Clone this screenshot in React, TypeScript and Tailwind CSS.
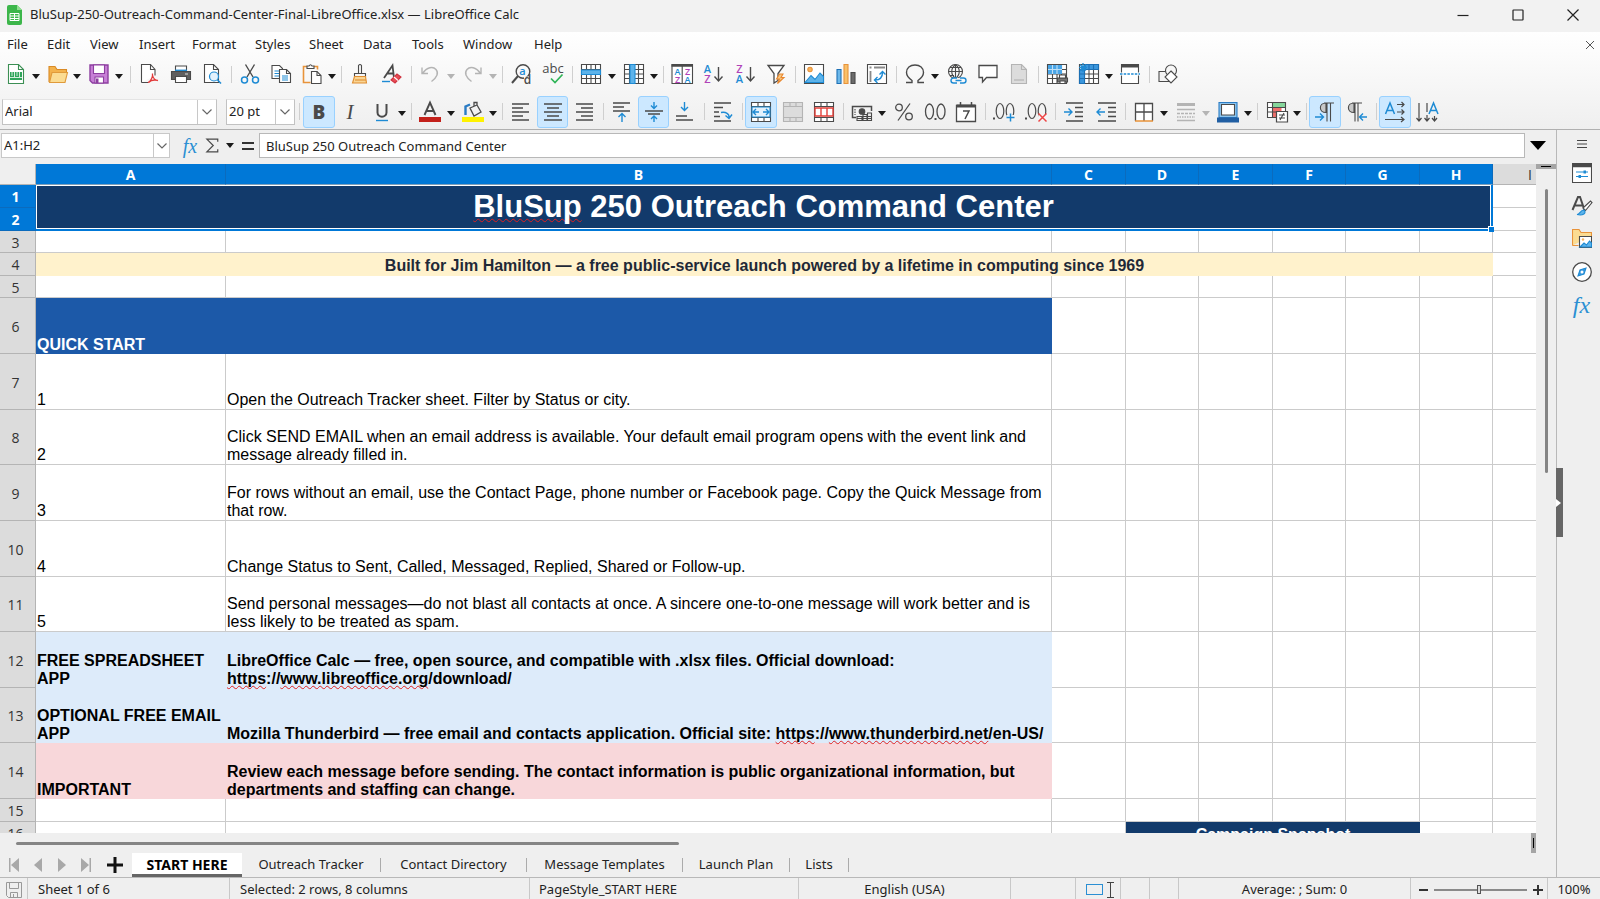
import React from 'react';

const ink = '#4a4a4a';
const blue = '#1e8bd4';
const grey = '#b4b4b4';

const Svg = ({ children, className = 'size-5' }: { children: React.ReactNode; className?: string }) => (
  <svg viewBox="0 0 20 20" className={`shrink-0 ${className}`} fill="none" stroke={ink} strokeWidth="1.1" aria-hidden="true">
    {children}
  </svg>
);

const glyph = { stroke: 'none', fontFamily: 'Open Sans, sans-serif', textAnchor: 'middle' as const };

const Lines = ({ rows, y0 = 2, step = 4, color = ink }: { rows: [number, number][]; y0?: number; step?: number; color?: string }) => (
  <path stroke={color} strokeWidth="1.4" d={rows.map(([a, b], i) => `M${a} ${y0 + i * step}H${b}`).join('')} />
);

const TableGrid = ({ stroke = ink }: { stroke?: string }) => (
  <path stroke={stroke} d="M.5.5h19v19H.5zM.5 5.500h19M.5 10h19M.5 14.500h19M5.500.5v19M10 .5v19M14.500.5v19" />
);

const icons: Record<string, React.ReactNode> = {
  newDoc: <><path fill="#fff" stroke="#3c8f54" d="M2.5.5h10l5 5v14h-15z" /><path stroke="#3c8f54" d="M12.5.5v5h5" /><path fill="#2fa55a" stroke="none" d="M4 8h12v8H4z" /><path stroke="#fff" strokeWidth=".8" d="M6 8v4M8.500 8v5M11 8v4M13.500 8v5M4 13.500h12" /></>,
  open: <><path fill="#f3b24b" stroke="#d98a26" d="M1 18V2.500h6l2 3h9.500V8" /><path fill="#fbdc92" stroke="#e09a3a" d="M1.500 18.500 4 8.500h15.500L17 18.500z" /></>,
  save: <><path fill="#c77fd6" stroke="#8d3fa0" strokeWidth="1.400" d="M1 1h18v18H3.500L1 16.500z" /><path fill="#fff" stroke="#8d3fa0" d="M4.500 1h11v8.500h-11zM6 13h8.500v6H6z" /><path fill="#8d3fa0" stroke="none" d="M7 14.500h2.500V19H7z" /></>,
  pdf: <><path fill="#fff" d="M2.500 18.500V.5h9l4.500 5v6M2.500 18.500h6.500" /><path d="M11.500.5v5H16" /><path stroke="#e23a3a" strokeWidth="1.300" d="M9 18.500c3-1.500 5-5.500 4.500-9M13.500 11c.5 3 2 5 5.500 5.500M9.500 18.500c2-2 6-3 9.500-2" /></>,
  print: <><path fill="#fff" d="M4.500 7V2h11v5" /><path stroke={blue} strokeWidth="1.800" d="M4 6.500h12" /><path fill="#5f5f5f" stroke={ink} d="M.5 7.500h19v8H.5z" /><path fill="#fff" d="M4.500 12.500h11v6h-11z" /><path stroke="#d0d0d0" d="M14 10h3" /></>,
  preview: <><path fill="#fff" d="M2.500.5h9l5 5v13h-14z" /><path d="M11.500.5v5h5" /><circle cx="12" cy="12.500" r="4.500" fill="#e3f1fc" stroke={blue} strokeWidth="1.200" /><path stroke={blue} strokeWidth="1.600" d="m15.500 16 3.500 3.500" /></>,
  cut: <><path strokeWidth="1.400" d="M5.500.5 13 13M14.500.5 7 13" /><circle cx="4.500" cy="16" r="3" stroke={blue} strokeWidth="1.500" /><circle cx="15.500" cy="16" r="3" stroke={blue} strokeWidth="1.500" /></>,
  copy: <><path fill="#fff" d="M1 14.500V1.500h7.500l3 3v10z" /><path stroke={blue} d="M3.500 7h5M3.500 9.500h5M3.500 12h5" /><path fill="#fff" d="M8.500 18.500v-13h7l4 4v9z" /><path d="M15.500 5.500v4h4" /><path stroke={blue} d="M11 12h6M11 14h6M11 16h6" /></>,
  paste: <><path stroke="#e8933a" strokeWidth="1.600" d="M8.500 18.500H1.500V2.500h3.500M12 2.500h3.500v3" /><path fill="#fff" d="M5 4.500V2h2q1.500-2.500 3 0h2v2.500z" /><path fill="#fff" d="M9.500 19.500v-12h5.500l4 4v8z" /><path d="M15 7.500v4h4" /></>,
  clone: <><path fill="#f6f6f6" d="M8.500 9V1.500q1.500-2 3 0V9M4.500 12.500v-3h11v3z" /><path fill="#f9d594" stroke="#e08e30" d="M4.500 12.500h11l1 6.500h-14z" /><path stroke="#e08e30" d="M5 16h11" /></>,
  clear: <><path strokeWidth="1.800" d="M2 14 10.500 1.500 12 14M5 9.500h6.500" /><path stroke={blue} strokeWidth="1.400" d="M0 17.500h8" /><path fill="#e94b55" stroke="#cf3440" d="m9 16 6-6 4 3-6 6z" /><path stroke="#fff" d="m12 13 4 3.500" /></>,
  undo: <path stroke={grey} strokeWidth="1.400" d="M2 3.500v6h6M2.500 9.500C7 3 13 2 16 5.500s1 8-4.500 12" />,
  redo: <path stroke={grey} strokeWidth="1.400" d="M18 3.500v6h-6M17.500 9.500C13 3 7 2 4 5.500s-1 8 4.500 12" />,
  find: <><circle cx="12" cy="7.500" r="6.800" strokeWidth="1.400" /><path strokeWidth="2" d="M7 12 1 19" /><path stroke="#fafafa" strokeWidth="7" d="M13 16h8" /><text {...glyph} x="11.500" y="11" fontSize="11" fontWeight="600" fill={blue}>a</text><text {...glyph} x="16.500" y="20" fontSize="12" fontWeight="600" fill={ink}>d</text></>,
  spell: <><text {...glyph} x="10" y="9" fontSize="13" fill={ink}>abc</text><path stroke="#2fb457" strokeWidth="1.700" d="m8 14.500 4 4 7.500-8" /></>,
  rowIns: <><path fill="#fff" stroke="none" d="M1 1h18v18H1z" /><TableGrid /><path fill="#5db3ea" stroke={blue} d="M.5 6h19v4.500H.5z" /></>,
  colIns: <><path fill="#fff" stroke="none" d="M1 1h18v18H1z" /><TableGrid /><path fill="#5db3ea" stroke={blue} d="M6 .5h5v19H6z" /></>,
  sort: <><path fill="#fff" d="M0 .5h20.500v19H0zM10.200 2v18" /><path strokeWidth="2.500" d="M-.5 1.500h21.500" /><g fontSize="9" fontWeight="600"><text {...glyph} x="5.500" y="10.500" fill={blue}>A</text><text {...glyph} x="5.500" y="18.500" fill="#b043b8">Z</text><text {...glyph} x="15.500" y="10.500" fill="#b043b8">Z</text><text {...glyph} x="15.500" y="18.500" fill={blue}>A</text></g></>,
  az: <><g fontSize="11" fontWeight="600"><text {...glyph} x="4.500" y="8.500" fill={blue}>A</text><text {...glyph} x="4.500" y="19" fill="#b043b8">Z</text></g><path strokeWidth="1.400" d="M15.500 3v14M11.500 12.500l4 4.500 4-4.500" /></>,
  za: <><g fontSize="11" fontWeight="600"><text {...glyph} x="4.500" y="8.500" fill="#b043b8">Z</text><text {...glyph} x="4.500" y="19" fill={blue}>A</text></g><path strokeWidth="1.400" d="M15.500 3v14M11.500 12.500l4 4.500 4-4.500" /></>,
  filter: <><path fill="#fff" strokeWidth="1.300" d="M2 1.500h16l-6 8v7L8 19V9.500z" /><path fill="#f9c983" stroke="#e8872e" d="m13.500 10-3 5h3l-2 4.500 6.500-6h-3l2-3.500z" /></>,
  image: <><path fill="#fff" d="M.5.5h19v19H.5z" /><circle cx="6" cy="5.500" r="2.200" fill="#f7b35c" stroke="#e8933a" /><path fill="#5db3ea" stroke={blue} d="m1 18.500 6-7 4 4 5-6.500 3.500 3.500v6z" /></>,
  chart: <><path fill="#6cb8ea" stroke="#1d70b5" d="M1 5.500h4v14H1z" /><path fill="#f9c06a" stroke="#e8933a" d="M8 .5h4v19H8z" /><path fill="#6a6a6a" d="M15 8.500h4v11h-4z" /></>,
  pivot: <><path fill="#fff" d="M.5.5h19v19H.5z" /><path stroke="#8a8a8a" strokeWidth="1.800" d="M2.500 3.500h2M7 3.500h11M3.500 7v11" /><path stroke={blue} strokeWidth="1.400" d="M8 16c5 0 7.500-3 7.500-7.500M12.500 10.500l3-3 3 3M10.500 13 7.500 16l3 3" /></>,
  omega: <path strokeWidth="1.400" d="M1 18.500h6v-2C3.500 14 1.500 12 1.500 8.500 1.500 4 5 1 10 1s8.500 3 8.500 7.500c0 3.500-2 5.500-5.500 8v2h6" />,
  link: <><circle cx="8.500" cy="7.500" r="7" /><path d="M1.500 7.500h14M8.500.5v14M8.500.5c-5 4-5 10 0 14M8.500.5c5 4 5 10 0 14M3 3.500h11M3 11.500h4" /><path stroke="#f8f8f8" strokeWidth="5" d="M4 16.500h16" /><path stroke={blue} strokeWidth="1.400" d="M10 14H6.500a2.500 2.500 0 0 0 0 5H10M13 14h3.500a2.500 2.500 0 0 1 0 5H13M8.500 16.500h6" /></>,
  comment: <path fill="#fff" strokeWidth="1.300" d="M1 1.500h18v12H8.500L4.500 18v-4.500H1z" />,
  header: <><path fill="#dcdcdc" stroke={grey} d="M2.500.5h10l5 5v14h-15z" /><path stroke={grey} d="M12.500.5v5h5" /><path stroke="#c4c4c4" strokeWidth="2" d="M5 16h10" /></>,
  printRange: <><path fill="#fff" stroke="none" d="M1 1h18v18H1z" /><TableGrid /><path fill="#4aa5e6" stroke="none" d="M1 1h14v9H1z" /><path stroke="#bfe0f7" d="M1 5.500h14M5.500 1v9M10 1v9" /><path fill="#777" stroke={ink} d="M10.500 14h10v4h-10z" /><path fill="#fff" d="M12.500 11h6v3h-6zM13 17h5v2.500h-5z" /></>,
  freeze: <><path fill="#fff" stroke="none" d="M3 3h16v16H3z" /><TableGrid /><path fill="#3b97dd" stroke="#1d70b5" d="M6 .5h13.500v5H6zM.5 6h5v13.500h-5z" /><path stroke="#1d70b5" d="M10 .5v5M14.500.5v5M.5 10h5M.5 14.500h5" /><path stroke={blue} strokeWidth="1.300" d="M4-1v9M0 3.500h8M1 .5l6 6M7 .5l-6 6" /></>,
  split: <><path fill="#fff" d="M1.500.5h17v19h-17z" /><path strokeWidth="3" d="M1 2h18" /><path stroke="#fff" strokeWidth="3" d="M0 10h20" /><path stroke={blue} strokeWidth="1.300" strokeDasharray="2.500 1.200" d="M0 10h20" /></>,
  shapes: <><path fill="#f3f3f3" d="M1 7.500h10v10H1z" /><circle cx="13" cy="6.500" r="5.500" fill="#f7f7f7" /><path fill="#fff" d="m13 7 6 6-6 6-6-6z" /></>,
  bold: <text {...glyph} x="10" y="17" fontSize="19" fontWeight="800" fill={ink}>B</text>,
  italic: <text {...glyph} x="10" y="17" fontSize="21" fontStyle="italic" style={{ fontFamily: 'Liberation Serif, serif' }} fill={ink}>I</text>,
  underline: <><path strokeWidth="2" d="M5.500 2v8.500c0 5.500 9 5.500 9 0V2" /><path stroke={blue} strokeWidth="1.400" d="M4 18.500h12" /></>,
  fontColor: <><path strokeWidth="1.900" d="M4.500 13 10 .5 15.500 13M6.500 9h7" /><path fill="#c3211b" stroke="none" d="M-1 15h22v5H-1z" /></>,
  fill: <><path fill="#f2f2f2" strokeWidth="1.300" d="m7 6 7-3 4 7-7 4zM11 4.500V.5h3V3" /><path stroke="#2b7cc4" strokeWidth="2.400" d="M2.500 13V4.500L7 2.500" /><path fill="#fff200" stroke="none" d="M-1 15h22v5H-1z" /></>,
  alignL: <Lines rows={[[1, 18], [1, 12], [1, 18], [1, 12], [1, 18]]} />,
  alignC: <Lines rows={[[1, 19], [4, 16], [1, 19], [4, 16], [1, 19]]} />,
  alignR: <Lines rows={[[2, 19], [7, 19], [2, 19], [7, 19], [2, 19]]} />,
  alignT: <><Lines rows={[[1, 18], [1, 12], [1, 18]]} y0={1} /><path stroke={blue} strokeWidth="1.400" d="M10 20v-8M6.500 15 10 11.500l3.500 3.500" /></>,
  alignM: <><Lines rows={[[1, 19], [4, 16]]} y0={9} step={3} /><path stroke={blue} strokeWidth="1.400" d="M10 0v6M7 3.500 10 6.500l3-3M10 20v-5.500M7 17l3-3 3 3" /></>,
  alignB: <><Lines rows={[[1, 12], [1, 18]]} y0={14} /><path stroke={blue} strokeWidth="1.400" d="M9.500 0v8M6 5l3.500 3.500L13 5" /></>,
  wrap: <><Lines rows={[[1, 18], [1, 10]]} y0={1} step={4.5} /><Lines rows={[[1, 6], [1, 7], [1, 18]]} y0={10} step={4.5} /><path stroke={blue} strokeWidth="1.400" d="M8 10.500c5-1 8.500 1.500 8 5M12.500 13.500l3.500 3 3-4" /></>,
  merge: <><path fill="#fff" d="M.5.5h19v19H.5zM.5 4.500h19M.5 15.500h19M7 .5v4M13 .5v4M7 15.500v4M13 15.500v4" /><path fill="#e3f2fd" stroke={blue} d="M1 5h18v10H1z" /><path stroke={blue} strokeWidth="1.400" d="M2 10h6M12 10h6M5 7l-3 3 3 3M15 7l3 3-3 3" /></>,
  mergeOff: <path fill="#dcdcdc" stroke={grey} d="M.5.5h19v19H.5zM.5 4.500h19M.5 15.500h19M7 .5v4M13 .5v4M7 15.500v4M13 15.500v4" />,
  unmerge: <><path fill="#fff" d="M.5.5h19v19H.5zM.5 4.500h19M.5 15.500h19M7 .5v4M13 .5v4M7 15.500v4M13 15.500v4" /><path fill="#fff" stroke="#e2403a" strokeWidth="1.400" d="M1 6h18v8H1zM7 6v8M13 6v8" /></>,
  currency: <><path strokeWidth="1.500" d="M4 15.500H.5v-11h19V9" /><circle cx="10" cy="9.500" r="2.800" fill={ink} /><path strokeDasharray="1.500 1" d="M3 7v6" /><path fill="#eee" d="M5 14.500h5v4H5zM11 12.500h4v6h-4zM15.500 11h4v7.500h-4zM11 14.500h8.500M5 16.500h14.500" /></>,
  percent: <><path strokeWidth="1.300" d="M16 1.500 4 18.500" /><circle cx="5" cy="5.500" r="3.300" strokeWidth="1.300" /><circle cx="15" cy="14.500" r="3.300" strokeWidth="1.300" /></>,
  number: <><ellipse cx="4.500" cy="9.500" rx="4" ry="7.500" strokeWidth="1.300" /><ellipse cx="16" cy="9.500" rx="4" ry="7.500" strokeWidth="1.300" /><path strokeWidth="2" d="M9.500 17h2" /></>,
  calendar: <><path fill="#fff" strokeWidth="1.300" d="M.5 3.500h19v16H.5z" /><path strokeWidth="3" d="M.5 4h19" /><path strokeWidth="1.500" d="M4.500 0v4M15.500 0v4" /><path strokeWidth="1.500" d="M7 9h6l-4 8" /></>,
  addDec: <><path strokeWidth="2" d="M-1 16.500h2" /><ellipse cx="6" cy="9" rx="3.800" ry="7.500" strokeWidth="1.200" /><ellipse cx="16" cy="9" rx="3.800" ry="7.500" strokeWidth="1.200" /><path stroke="#f4f4f4" strokeWidth="5" d="M12.500 15.500h9" /><path stroke={blue} strokeWidth="1.500" d="M12.500 15.500h8M16.500 11.500v8" /></>,
  delDec: <><path strokeWidth="2" d="M-1 16.500h2" /><ellipse cx="6" cy="9" rx="3.800" ry="7.500" strokeWidth="1.200" /><ellipse cx="16" cy="9" rx="3.800" ry="7.500" strokeWidth="1.200" /><path stroke="#f4f4f4" strokeWidth="6" d="M12.500 15.500h9" /><path stroke="#ef4444" strokeWidth="1.500" d="m12.500 11.500 8 8M20.500 11.500l-8 8" /></>,
  indent: <><Lines rows={[[2, 19], [11, 19], [11, 19], [11, 19], [2, 19]]} y0={1} step={4.5} /><path stroke={blue} strokeWidth="1.400" d="M0 10h7.500M4.500 6.500 8 10l-3.500 3.500" /></>,
  outdent: <><Lines rows={[[2, 20], [12, 20], [12, 20], [12, 20], [2, 20]]} y0={1} step={4.5} /><path stroke={blue} strokeWidth="1.400" d="M9 10H1M4.500 6.500 1 10l3.500 3.500" /></>,
  borders: <><path fill="#fff" strokeWidth="1.300" d="M1.500 19V1.500h17V19M10 1.500V19M1.500 10h17" /><path stroke="#e8933a" strokeWidth="1.500" d="M1 19h18" /></>,
  lineStyle: <><path stroke={grey} strokeWidth="3" d="M1 2.500h18" /><path stroke={grey} strokeWidth="1.500" d="M1 7.500h18M1 18.500h18" /><path stroke={grey} strokeWidth="1.500" strokeDasharray="3 1" d="M1 11.500h18" /><path stroke={grey} strokeWidth="1.500" strokeDasharray="1.500 1" d="M1 15h18" /></>,
  borderColor: <><path fill="#8cc5ef" stroke="#2b7cc4" d="M1 .5h18v15H1z" /><path fill="#fff" d="M3.500 2.500h13v10.500h-13z" /><path fill="#215fa3" stroke="none" d="M-1 15.500h22v5H-1z" /></>,
  condFmt: <><path fill="#fff" stroke="none" d="M1 1h18v15H1z" /><path fill="#86d69b" stroke="none" d="M5.500 1H18v4.500H5.500z" /><path fill="#f0706c" stroke="none" d="M5.500 5.500h9V10h-9zM5.500 10h4v5.500h-4z" /><path d="M.5.5h18v15H.5zM.5 5.500h18M.5 10h18M5.500.5v15" /><path fill="#fff" strokeWidth="1.200" d="M9.500 9.500h11v10.500h-11z" /><path d="M12 13h6M12 16h6M17 11l-4 7" /></>,
  ltr: <><path fill="#c8c8c8" d="M11 1v9.500C3.500 10.500 3.500 1 11 1zM9 1h10M12 1v18.500M15.500 1v18.500" /><path stroke={blue} strokeWidth="1.400" d="M0 15h8M5 11.500 8.500 15 5 18.500" /></>,
  rtl: <><path fill="#c8c8c8" d="M7 1v9.500C-.5 10.500-.5 1 7 1zM5 1h10M8 1v18.500M11 1v18.500" /><path stroke={blue} strokeWidth="1.400" d="M20 15h-7.500M16 11.500 12.500 15l3.500 3.500" /></>,
  textH: <><path stroke={blue} strokeWidth="1.500" d="M.5 12 5 1l4.500 11M2 8.500h6" /><path strokeWidth="1.200" d="M12 2.500h7M16.500 0 19 2.500 16.500 5M12 10h7M16.500 7.500 19 10l-2.500 2.500M0 17.500h19M16 15l3 2.500-3 2.500" /></>,
  textV: <><path stroke={blue} strokeWidth="1.500" d="M12 12 16.500 1 21 12M13.500 8.500h6" /><path strokeWidth="1.200" d="M2 1v18M-.5 16 2 19l2.500-3M10 1v9M10 13v6M7.500 16l2.500 3 2.500-3M17.500 14v5M15 16l2.500 3 2.500-3" /></>,
};

type Tool = { id: string; label: string; split?: boolean; on?: boolean; off?: boolean };
type ToolGroup = { width: string; tools: Tool[] };

const t = (id: string, label: string, flags = ''): Tool => ({
  id, label, split: flags.includes('s'), on: flags.includes('a'), off: flags.includes('d'),
});

const standardBar: ToolGroup[] = [
  { width: 'w-[130px] pr-[5px]', tools: [t('newDoc', 'New', 's'), t('open', 'Open', 's'), t('save', 'Save', 's')] },
  { width: 'w-[101px] px-[3px]', tools: [t('pdf', 'Export as PDF'), t('print', 'Print'), t('preview', 'Print Preview')] },
  { width: 'w-[110px] px-[3px]', tools: [t('cut', 'Cut'), t('copy', 'Copy'), t('paste', 'Paste', 's')] },
  { width: 'w-[70px] px-[3px]', tools: [t('clone', 'Clone Formatting'), t('clear', 'Clear Formatting')] },
  { width: 'w-[91px] px-[3px]', tools: [t('undo', 'Undo', 'sd'), t('redo', 'Redo', 'sd')] },
  { width: 'w-[70px] px-[3px]', tools: [t('find', 'Find and Replace'), t('spell', 'Spelling')] },
  { width: 'w-[91px] px-[3px]', tools: [t('rowIns', 'Row', 's'), t('colIns', 'Column', 's')] },
  { width: 'w-[132px] px-[3px]', tools: [t('sort', 'Sort'), t('az', 'Sort Ascending'), t('za', 'Sort Descending'), t('filter', 'AutoFilter')] },
  { width: 'w-[101px] px-[3px]', tools: [t('image', 'Insert Image'), t('chart', 'Insert Chart'), t('pivot', 'Pivot Table')] },
  { width: 'w-[142px] px-[3px]', tools: [t('omega', 'Special Character', 's'), t('link', 'Hyperlink'), t('comment', 'Comment'), t('header', 'Headers and Footers', 'd')] },
  { width: 'w-[111px] px-[3px]', tools: [t('printRange', 'Print Area'), t('freeze', 'Freeze', 's'), t('split', 'Split Window')] },
  { width: 'w-[38px] px-[3px]', tools: [t('shapes', 'Draw Functions')] },
];

const formatBar: ToolGroup[] = [
  { width: 'w-[111px] px-[3px]', tools: [t('bold', 'Bold', 'a'), t('italic', 'Italic'), t('underline', 'Underline', 's')] },
  { width: 'w-[91px] px-[3px]', tools: [t('fontColor', 'Font Color', 's'), t('fill', 'Background Color', 's')] },
  { width: 'w-[101px] px-[3px]', tools: [t('alignL', 'Align Left'), t('alignC', 'Center Horizontally', 'a'), t('alignR', 'Align Right')] },
  { width: 'w-[101px] px-[3px]', tools: [t('alignT', 'Align Top'), t('alignM', 'Center Vertically', 'a'), t('alignB', 'Align Bottom')] },
  { width: 'w-[38px] px-[3px]', tools: [t('wrap', 'Wrap Text')] },
  { width: 'w-[101px] px-[3px]', tools: [t('merge', 'Merge and Center', 'a'), t('mergeOff', 'Merge Cells', 'd'), t('unmerge', 'Unmerge Cells')] },
  { width: 'w-[142px] px-[3px]', tools: [t('currency', 'Currency', 's'), t('percent', 'Percent'), t('number', 'Number'), t('calendar', 'Date')] },
  { width: 'w-[70px] px-[3px]', tools: [t('addDec', 'Add Decimal Place'), t('delDec', 'Delete Decimal Place')] },
  { width: 'w-[70px] px-[3px]', tools: [t('indent', 'Increase Indent'), t('outdent', 'Decrease Indent')] },
  { width: 'w-[132px] px-[3px]', tools: [t('borders', 'Borders', 's'), t('lineStyle', 'Border Style', 'sd'), t('borderColor', 'Border Color', 's')] },
  { width: 'w-[49px] px-[3px]', tools: [t('condFmt', 'Conditional', 's')] },
  { width: 'w-[70px] px-[3px]', tools: [t('ltr', 'Left-To-Right', 'a'), t('rtl', 'Right-To-Left')] },
  { width: 'w-[70px] px-[3px]', tools: [t('textH', 'Text direction left to right', 'a'), t('textV', 'Text direction top to bottom')] },
];

const Caret = ({ off }: { off?: boolean }) => (
  <svg viewBox="0 0 8 5" className="h-[5px] w-2 shrink-0" aria-hidden="true"><path d="M0 0h8L4 5z" fill={off ? grey : '#1a1a1a'} /></svg>
);

const ToolButton = ({ tool }: { tool: Tool }) => (
  <div className={`flex items-center ${tool.split ? 'grow-[4] basis-0' : 'grow-[3] basis-0'}`}>
    <button
      aria-label={tool.label} disabled={tool.off}
      className={`flex h-8 grow items-center justify-center rounded-[3px] border ${tool.on ? 'border-[#99d1ff] bg-[#cce8ff]' : 'border-transparent'}`}
    >
      <Svg className="size-5 overflow-visible">{icons[tool.id]}</Svg>
    </button>
    {tool.split && (
      <button aria-label={`${tool.label} options`} disabled={tool.off} className="flex h-8 w-[10px] items-center pt-1"><Caret off={tool.off} /></button>
    )}
  </div>
);

const Toolbar = ({ groups }: { groups: ToolGroup[] }) => (
  <div className="flex items-center">
    {groups.map((g, i) => (
      <div key={g.tools[0].id} className="flex items-center">
        {i > 0 && <span className="-mr-px h-[17px] w-px bg-[#cfcfcf]" />}
        <div className={`flex ${g.width}`}>{g.tools.map(tool => <ToolButton key={tool.id} tool={tool} />)}</div>
      </div>
    ))}
  </div>
);

const Chevron = () => (
  <svg viewBox="0 0 10 6" className="h-[6px] w-[10px]" fill="none" stroke="#666" strokeWidth="1.2" aria-hidden="true"><path d="m.5.5 4.500 4.500L9.500.5" /></svg>
);

const DropBox = ({ label, value, width }: { label: string; value: string; width: string }) => (
  <div className={`relative h-[26px] border border-[#c2c2c2] border-t-[#e4e4e4] bg-white ${width}`}>
    <select aria-label={label} defaultValue={value} className="size-full appearance-none bg-transparent pl-[2px] outline-none">
      <option>{value}</option>
    </select>
    <span className="pointer-events-none absolute inset-y-0 right-0 flex w-[19px] items-center justify-center border-l border-[#c8c8c8]"><Chevron /></span>
  </div>
);

const Fx = ({ className }: { className: string }) => (
  <span className={`font-['Liberation_Serif',serif] italic text-[#2b8fd3] ${className}`}>fx</span>
);

const Typo = ({ children }: { children: React.ReactNode }) => (
  <span className="underline decoration-[#e02020] decoration-wavy decoration-1 underline-offset-1 [text-decoration-skip-ink:none]">{children}</span>
);

const columns = [
  { name: 'A', width: 'w-[190px]' }, { name: 'B', width: 'w-[826px]' }, { name: 'C', width: 'w-[74px]' },
  { name: 'D', width: 'w-[73px]' }, { name: 'E', width: 'w-[74px]' }, { name: 'F', width: 'w-[73px]' },
  { name: 'G', width: 'w-[74px]' }, { name: 'H', width: 'w-[73px]' },
];

const rows: { n: number; h: string; a: string; b: React.ReactNode; tone?: string }[] = [
  { n: 7, h: 'h-[56px]', a: '1', b: 'Open the Outreach Tracker sheet. Filter by Status or city.' },
  { n: 8, h: 'h-[55px]', a: '2', b: 'Click SEND EMAIL when an email address is available. Your default email program opens with the event link and message already filled in.' },
  { n: 9, h: 'h-[56px]', a: '3', b: 'For rows without an email, use the Contact Page, phone number or Facebook page. Copy the Quick Message from that row.' },
  { n: 10, h: 'h-[56px]', a: '4', b: 'Change Status to Sent, Called, Messaged, Replied, Shared or Follow-up.' },
  { n: 11, h: 'h-[55px]', a: '5', b: 'Send personal messages—do not blast all contacts at once. A sincere one-to-one message will work better and is less likely to be treated as spam.' },
  { n: 12, h: 'h-[56px]', a: 'FREE SPREADSHEET APP', b: <>LibreOffice Calc — free, open source, and compatible with .xlsx files. Official download: <Typo>https</Typo>://<Typo>www.libreoffice.org</Typo>/download/</>, tone: 'bg-[#ddebfa]' },
  { n: 13, h: 'h-[55px]', a: 'OPTIONAL FREE EMAIL APP', b: <>Mozilla Thunderbird — free email and contacts application. Official site: <Typo>https</Typo>://<Typo>www.thunderbird.net</Typo>/en-US/</>, tone: 'bg-[#ddebfa]' },
  { n: 14, h: 'h-[56px]', a: 'IMPORTANT', b: 'Review each message before sending. The contact information is public organizational information, but departments and staffing can change.', tone: 'bg-[#f8d7da]' },
];

const cell = 'border-r border-b border-[#cbcbcb]';

const RowHead = ({ n, on }: { n: number; on?: boolean }) => (
  <th scope="row" className={`border-r border-b pt-[3px] pr-1 align-middle font-['Open_Sans',sans-serif] text-[14px] leading-none ${on ? 'border-[#0b6bbd] bg-[#0078d7] font-bold text-white' : 'border-[#b4b4b4] bg-[#dcdcdc] font-normal text-[#333]'}`}>{n}</th>
);

const Blanks = ({ count }: { count: number }) => (
  <>{Array.from({ length: count }, (_, i) => <td key={i} className={cell} />)}</>
);

const Sheet = () => (
  <table className="w-full table-fixed border-separate border-spacing-0 bg-white font-['Liberation_Sans',Arial,sans-serif] text-[16px] leading-[18px] whitespace-normal text-black">
    <colgroup>
      <col className="w-9" />
      {columns.map(c => <col key={c.name} className={c.width} />)}
      <col />
    </colgroup>
    <thead>
      <tr className="h-[21px] font-['Open_Sans',sans-serif] text-[14px] leading-none">
        <td className="border-r border-b border-[#b4b4b4] bg-[#efefef]" />
        {columns.map(c => <th key={c.name} scope="col" className="border-r border-b border-[#0b6bbd] border-b-[#7f9fba] bg-[#0078d7] pt-[2px] font-bold text-white">{c.name}</th>)}
        <th scope="col" className="border-b border-[#b4b4b4] bg-[#dcdcdc] pt-[2px] pr-1 text-right font-normal text-[#333]">I</th>
      </tr>
    </thead>
    <tbody>
      <tr className="h-[23px]">
        <RowHead n={1} on />
        <td colSpan={8} rowSpan={2} className="relative border-r-2 border-b-2 border-[#0078d7] bg-white p-px">
          <div className="flex h-[42px] items-center justify-center bg-[#123a6b] text-[31px] leading-9 font-bold text-white"><span><Typo>BluSup</Typo> 250 Outreach Command Center</span></div>
          <span className="absolute -right-[3px] -bottom-[3px] size-[6px] border-t border-l border-white bg-[#0078d7]" />
        </td>
        <td className="border-b border-[#cbcbcb]" />
      </tr>
      <tr className="h-[23px]"><RowHead n={2} on /><td className="border-b border-[#cbcbcb]" /></tr>
      <tr className="h-[22px]"><RowHead n={3} /><Blanks count={8} /><td className="border-b border-[#cbcbcb]" /></tr>
      <tr className="h-[23px]">
        <RowHead n={4} />
        <td colSpan={8} className="bg-[#fff2cc] pt-[3px] text-center align-middle font-bold text-[#1f2937]">Built for Jim Hamilton — a free public-service launch powered by a lifetime in computing since 1969</td>
        <td className="border-b border-[#cbcbcb]" />
      </tr>
      <tr className="h-[22px]"><RowHead n={5} /><Blanks count={8} /><td className="border-b border-[#cbcbcb]" /></tr>
      <tr className="h-[56px]">
        <RowHead n={6} />
        <td colSpan={2} className="bg-[#1c59a8] px-px align-bottom font-bold text-white">QUICK START</td>
        <Blanks count={6} /><td className="border-b border-[#cbcbcb]" />
      </tr>
      {rows.map(r => (
        <tr key={r.n} className={r.h}>
          <RowHead n={r.n} />
          <td className={`px-px align-bottom ${r.tone ? `font-bold ${r.tone}` : cell}`}>{r.a}</td>
          <td className={`px-px align-bottom ${r.tone ? `font-bold ${r.tone}` : cell}`}>{r.b}</td>
          <Blanks count={6} /><td className="border-b border-[#cbcbcb]" />
        </tr>
      ))}
      <tr className="h-[23px]"><RowHead n={15} /><Blanks count={8} /><td className="border-b border-[#cbcbcb]" /></tr>
      <tr className="h-[23px]">
        <RowHead n={16} /><Blanks count={3} />
        <td colSpan={4} className="bg-[#123a6b] pt-[3px] text-center align-middle font-bold text-white">Campaign Snapshot</td>
        <Blanks count={1} /><td />
      </tr>
    </tbody>
  </table>
);

const sheetTabs = [
  { name: 'Outreach Tracker', width: 'w-[139px]' }, { name: 'Contact Directory', width: 'w-[146px]' },
  { name: 'Message Templates', width: 'w-[156px]' }, { name: 'Launch Plan', width: 'w-[107px]' }, { name: 'Lists', width: 'w-[59px]' },
];

const TabNav = ({ label, d }: { label: string; d: string }) => (
  <button aria-label={label} className="flex w-6 items-center justify-center">
    <svg viewBox="0 0 12 14" className="h-[14px] w-3" aria-hidden="true"><path d={d} fill="#a8a8a8" /></svg>
  </button>
);

const SheetTabs = () => (
  <div className="flex h-[24px] items-stretch">
    <div className="flex w-[132px] items-stretch pl-[2px]">
      <TabNav label="First sheet" d="M1 0h1.500v14H1zM11 0v14L3 7z" />
      <TabNav label="Previous sheet" d="M10 0v14L2 7z" />
      <TabNav label="Next sheet" d="M2 0v14l8-7z" />
      <TabNav label="Last sheet" d="M1 0v14l8-7zM9.500 0H11v14H9.500z" />
      <button aria-label="Add sheet" className="flex grow items-center justify-center">
        <svg viewBox="0 0 16 16" className="size-4" stroke="#111" strokeWidth="3" aria-hidden="true"><path d="M8 0v16M0 8h16" /></svg>
      </button>
    </div>
    <button className="w-[110px] border-b-[3px] border-[#666] bg-white pt-[2px] text-[14px] leading-none font-bold text-black">START HERE</button>
    {sheetTabs.map(s => (
      <button key={s.name} className={`flex items-center justify-center ${s.width}`}>
        <span className="grow">{s.name}</span><span className="h-[14px] w-px bg-[#ababab]" />
      </button>
    ))}
  </div>
);

const Sidebar = () => (
  <aside className="relative flex w-[44px] shrink-0 flex-col items-center border-l border-[#b8b8b8] bg-[#efefef] pt-2">
    <button aria-label="Sidebar settings" className="mb-[7px] flex h-3 items-center pl-[6px]">
      <svg viewBox="0 0 10 8" className="h-2 w-[10px]" stroke="#444" aria-hidden="true"><path d="M0 .5h10M0 4h10M0 7.500h10" /></svg>
    </button>
    <div className="flex flex-col gap-px pl-[6px]">
      <button aria-label="Properties" className="flex h-8 items-center justify-center"><Svg><path fill="#fff" d="M.5.5h19v19H.5z" /><path strokeWidth="3.500" d="M.5 2.500h19" /><path stroke={blue} strokeWidth="1.200" d="M4 9h12M4 13.500h12" /><path stroke={blue} strokeWidth="3" d="M11.500 9h2.500M6.500 13.500H9" /></Svg></button>
      <button aria-label="Styles" className="flex h-8 items-center justify-center"><Svg className="size-5 overflow-visible"><path strokeWidth="2" d="M.5 14 6 1h2l4.500 13M3 9.500h8" /><path fill="#fff" d="m11 12 7.500-7 1.500 1.500-6.500 8z" /><path fill="#5db3ea" stroke={blue} d="M5 18.500c3 0 3.500-5 7-4.500 3 3-1 6-7 4.500z" /></Svg></button>
      <button aria-label="Gallery" className="flex h-8 items-center justify-center"><Svg><path fill="#fbdc92" stroke="#e8933a" d="M.5 16.500v-16H7l2 3h10.500V7M.5 16.500h6" /><path fill="#fff" d="M7.500 7.500h12v11h-12z" /><circle cx="11" cy="10.500" r="1.200" fill="#f7b35c" stroke="none" /><path fill="#5db3ea" stroke={blue} d="m8 18 4-4 2.500 2 3-4 2 2v4z" /></Svg></button>
      <button aria-label="Navigator" className="flex h-8 items-center justify-center"><Svg><circle cx="10" cy="10" r="9.300" fill="#fff" strokeWidth="1.300" /><path fill="#3a98dd" stroke={blue} d="M14 6 12 12l-6 2 2-6z" /><circle cx="10" cy="10" r="1.500" fill="#fff" stroke="none" /></Svg></button>
      <button aria-label="Functions" className="flex h-8 items-center justify-center"><Fx className="text-[24px] leading-5" /></button>
    </div>
    <button aria-label="Hide sidebar" className="absolute top-[338px] -left-px flex h-[69px] w-[7px] items-center bg-[#666]">
      <svg viewBox="0 0 5 8" className="h-2 w-[5px]" fill="#fff" aria-hidden="true"><path d="M0 0v8l5-4z" /></svg>
    </button>
  </aside>
);

const FormulaBar = () => (
  <div className="flex h-[34px] items-start bg-[#efefef] pt-[3px] pl-px">
    <div className="flex h-[25px] w-[169px] border border-[#c8c8c8] bg-white">
      <input aria-label="Name Box" defaultValue="A1:H2" className="min-w-0 grow pl-[2px] outline-none" />
      <button aria-label="Name list" className="flex w-[19px] items-center justify-center border-l border-[#c8c8c8]"><Chevron /></button>
    </div>
    <div className="flex h-[25px] w-[89px] items-center pl-3">
      <button aria-label="Function Wizard" className="w-4 leading-none"><Fx className="text-[20px]" /></button>
      <button aria-label="Select Function" className="ml-[7px] flex items-center gap-[6px]">
        <Svg className="size-[15px]"><path strokeWidth="1.600" d="M17 5V1.500H2.500L11 10l-8.500 8.500H17V15" /></Svg><Caret />
      </button>
      <button aria-label="Formula" className="ml-2">
        <svg viewBox="0 0 12 8" className="h-2 w-3" stroke="#333" strokeWidth="2" aria-hidden="true"><path d="M0 1h12M0 7h12" /></svg>
      </button>
    </div>
    <input aria-label="Input line" defaultValue="BluSup 250 Outreach Command Center" className="h-[25px] min-w-0 grow border border-[#b8b8b8] bg-white pl-[6px] outline-none" />
    <button aria-label="Expand Formula Bar" className="flex h-[25px] w-[31px] items-center pl-[5px]">
      <svg viewBox="0 0 16 9" className="h-[9px] w-4" aria-hidden="true"><path d="M0 0h16L8 9z" /></svg>
    </button>
  </div>
);

const StatusBar = () => (
  <footer className="flex h-[22px] shrink-0 border-t border-[#b8b8b8] bg-[#efefef] *:flex *:items-center *:border-r *:border-[#c8c8c8] *:pt-[2px]">
    <div className="w-7 pl-[6px]"><svg viewBox="0 0 16 16" className="size-4" fill="none" stroke="#999" aria-hidden="true"><path d="M.5.5h15v15h-13l-2-2zM3.500.5v6h9v-6M4.500 15.500v-5h7v5M7.500 12v3.500" /></svg></div>
    <div className="w-[202px] pl-[10px]">Sheet 1 of 6</div>
    <div className="w-[300px] pl-[10px]">Selected: 2 rows, 8 columns</div>
    <div className="w-[269px] pl-[9px]">PageStyle_START HERE</div>
    <div className="w-[212px] justify-center">English (USA)</div>
    <div className="w-[65px]" />
    <div className="w-[45px] gap-1 pl-[10px]">
      <span className="h-[11px] w-[17px] border border-[#2b8fd3]" />
      <svg viewBox="0 0 7 16" className="h-4 w-[7px]" stroke="#444" fill="none" aria-hidden="true"><path d="M0 .5h7M0 15.500h7M3.500.5v15" /></svg>
    </div>
    <div className="w-[29px]" />
    <div className="w-[29px]" />
    <div className="grow justify-center">Average: ; Sum: 0</div>
    <div className="w-[137px] justify-center gap-[6px] pl-1">
      <button aria-label="Zoom Out" className="h-[2px] w-[9px] bg-[#333]" />
      <input
        type="range" aria-label="Zoom" min={0} max={100} defaultValue={48}
        className="h-4 w-[93px] appearance-none bg-[linear-gradient(#8a8a8a,#8a8a8a)] bg-[length:100%_2px] bg-center bg-no-repeat [&::-webkit-slider-thumb]:h-[9px] [&::-webkit-slider-thumb]:w-1 [&::-webkit-slider-thumb]:appearance-none [&::-webkit-slider-thumb]:border [&::-webkit-slider-thumb]:border-[#555] [&::-webkit-slider-thumb]:bg-[#ddd]"
      />
      <button aria-label="Zoom In">
        <svg viewBox="0 0 10 10" className="size-[10px]" stroke="#333" strokeWidth="2" aria-hidden="true"><path d="M5 0v10M0 5h10" /></svg>
      </button>
    </div>
    <div className="w-[52px] justify-center border-r-0!">100%</div>
  </footer>
);

export default function App() {
  return (
    <div className="flex h-screen flex-col overflow-hidden bg-[#efefef] font-['Noto_Sans','Open_Sans',sans-serif] text-[13px] whitespace-nowrap text-[#222]">
      <header className="flex h-8 shrink-0 items-center bg-[#f2f2f2] pb-[2px] pl-[7px]">
        <svg viewBox="0 0 15 20" className="mr-2 h-5 w-[15px]" aria-hidden="true">
          <path fill="#3cb64a" d="M2 0h8l5 5v13q0 2-2 2H2q-2 0-2-2V2Q0 0 2 0z" /><path fill="#8fe08f" d="M10 0v5h5z" />
          <path fill="none" stroke="#fff" d="M3 8.500h9v7H3zM3 11h9M3 13.500h9M7.500 8.500v7" />
        </svg>
        <h1 className="grow">BluSup-250-Outreach-Command-Center-Final-LibreOffice.xlsx — LibreOffice Calc</h1>
        {[['Minimize', 'M.5 6.500h11'], ['Maximize', 'M1.500 1h9q.5 0 .5.5v9q0 .5-.5.5h-9q-.5 0-.5-.5v-9Q1 1 1.500 1z'], ['Close', 'm.5.5 11 11M11.500.5l-11 11']].map(([label, d]) => (
          <button key={label} aria-label={label} className="flex h-[30px] w-[55px] items-center justify-center">
            <svg viewBox="0 0 12 12" className="size-3" fill="none" stroke="#222" strokeWidth="1.2" aria-hidden="true"><path d={d} /></svg>
          </button>
        ))}
      </header>

      <div className="flex h-[98px] shrink-0 flex-col border-b border-[#b0b0b0] bg-linear-to-b from-white to-[#efefef]">
        <nav className="flex h-[26px] items-center pl-[7px]">
          <ul className="flex grow *:shrink-0">
            {[['File', 'w-[40px]'], ['Edit', 'w-[43px]'], ['View', 'w-[49px]'], ['Insert', 'w-[53px]'], ['Format', 'w-[63px]'], ['Styles', 'w-[54px]'], ['Sheet', 'w-[54px]'], ['Data', 'w-[49px]'], ['Tools', 'w-[51px]'], ['Window', 'w-[71px]'], ['Help', 'w-[40px]']].map(([name, width]) => (
              <li key={name} className={width}><button>{name}</button></li>
            ))}
          </ul>
          <button aria-label="Close document" className="pr-[6px]">
            <svg viewBox="0 0 8 8" className="size-2" stroke="#555" aria-hidden="true"><path d="m0 0 8 8M8 0 0 8" /></svg>
          </button>
        </nav>
        <Toolbar groups={standardBar} />
        <div className="flex grow items-center pt-1">
          <div className="flex w-[299px] gap-[9px] pl-[2px]">
            <DropBox label="Font Name" value="Arial" width="w-[215px]" />
            <DropBox label="Font Size" value="20 pt" width="w-[69px]" />
          </div>
          <span className="h-[17px] w-px bg-[#cfcfcf]" />
          <Toolbar groups={formatBar} />
        </div>
      </div>

      <div className="flex min-h-0 grow">
        <main className="flex min-w-0 grow flex-col">
          <FormulaBar />
          <div className="flex min-h-0 grow">
            <div className="min-w-0 grow overflow-hidden bg-white"><Sheet /></div>
            <div className="flex w-5 shrink-0 flex-col items-center">
              <span className="flex h-[5px] w-full items-center justify-center bg-[#a5a5a5]"><span className="h-px w-[10px] bg-black" /></span>
              <span className="mt-5 h-[284px] w-[3px] rounded-full bg-[#858585]" />
            </div>
          </div>
          <div className="flex h-5 shrink-0 items-center justify-between pr-5 pl-4">
            <span className="h-[3px] w-[663px] rounded-full bg-[#858585]" />
            <span className="flex h-5 w-[5px] items-center justify-center bg-[#a5a5a5]"><span className="h-[10px] w-px bg-black" /></span>
          </div>
          <SheetTabs />
        </main>
        <Sidebar />
      </div>
      <StatusBar />
    </div>
  );
}
